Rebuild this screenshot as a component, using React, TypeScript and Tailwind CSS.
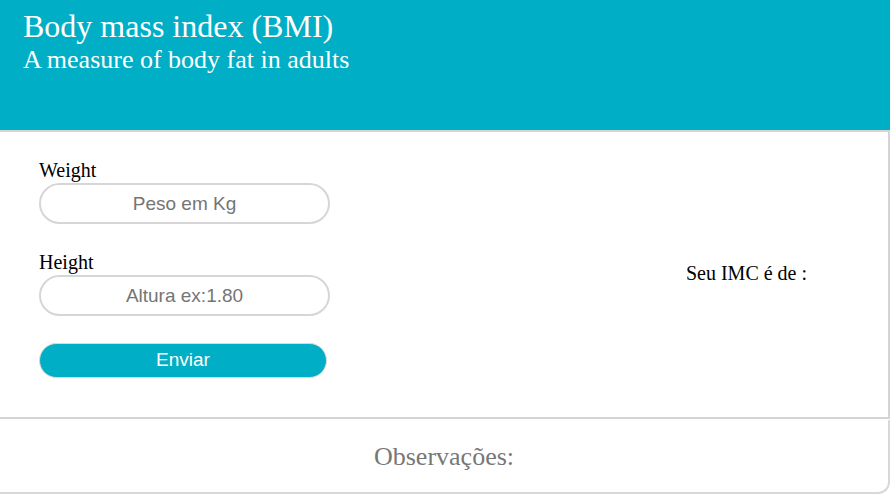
export default function App() {
  return (
    <div className="w-[890px] h-[500px] bg-white overflow-hidden font-['Liberation_Serif','Times_New_Roman',serif]">
      <header className="h-[130px] bg-[#00aec5] px-[23px] pt-[7px] text-white">
        <h1 className="text-[32px] leading-[38px] font-normal">Body mass index (BMI)</h1>
        <h2 className="text-[26px] leading-[30px] font-normal">A measure of body fat in adults</h2>
      </header>

      <main className="h-[289px] border-y-2 border-r-2 border-[#d4d4d4] grid grid-cols-[605px_1fr] items-center">
        <form
          className="self-start pt-[27px] pl-[39px] flex flex-col"
          onSubmit={(e) => {
            e.preventDefault();
          }}
        >
          <label className="flex flex-col text-[20px] leading-[23px] text-black">
            Weight
            <input
              type="text"
              placeholder="Peso em Kg"
              className="mt-[1px] w-[291px] h-[41px] rounded-full border-2 border-[#d6d6d6] bg-white text-center font-['Liberation_Sans',Arial,sans-serif] text-[19px] placeholder:text-[#757575] outline-none"
            />
          </label>
          <label className="mt-[27px] flex flex-col text-[20px] leading-[23px] text-black">
            Height
            <input
              type="text"
              placeholder="Altura ex:1.80"
              className="mt-[1px] w-[291px] h-[41px] rounded-full border-2 border-[#d6d6d6] bg-white text-center font-['Liberation_Sans',Arial,sans-serif] text-[19px] placeholder:text-[#757575] outline-none"
            />
          </label>
          <button
            type="submit"
            className="mt-[27px] w-[288px] h-[35px] rounded-full border border-[#e3d6d6] bg-[#00aec5] text-white font-['Liberation_Sans',Arial,sans-serif] text-[19px]"
          >
            Enviar
          </button>
        </form>
        <div className="text-center text-[20px] text-black pb-[3px]">Seu IMC é de :</div>
      </main>

      <footer className="mt-px h-[74px] border-r-2 border-b-2 border-[#d8d8d8] rounded-br-[12px] flex items-center justify-center">
        <p className="text-[26px] text-[#777]">Observações:</p>
      </footer>
    </div>
  );
}
